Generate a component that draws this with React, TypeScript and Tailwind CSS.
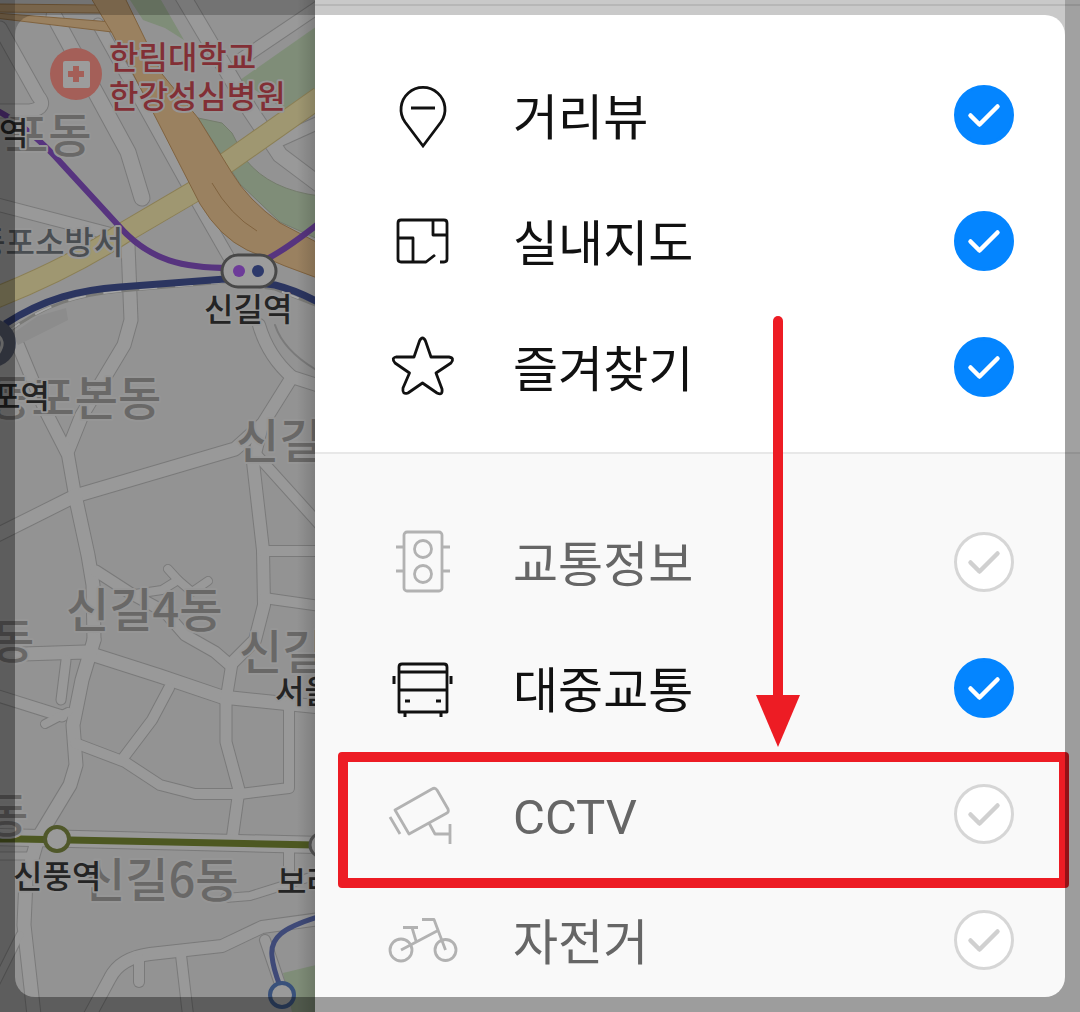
import React, { useState } from "react";

// road centre lines: [path, width]
const roads: [string, number][] = [
  ["M0 28 L38 96 Q48 108 30 111 L0 111", 15],
  ["M54 16 L128 152 L142 198", 17],
  ["M98 24 L188 186 L228 256", 13],
  ["M182 -5 L250 110 L280 155 L320 185", 17],
  ["M320 6 L240 60", 14],
  ["M320 122 L280 140", 14],
  ["M-5 204 L122 237", 14],
  ["M128 245 L131 320 L124 345 L82 415 L68 450", 15],
  ["M18 345 L45 410 L68 455 L75 495", 14],
  ["M-5 536 L75 496 L235 449 L262 425", 15],
  ["M75 495 L88 555 L93 585 L94 640", 15],
  ["M259 325 Q268 356 292 377 L262 425 L253 462 L263 550 L264 605 L255 640 L232 663", 14],
  ["M275 325 Q284 352 320 372", 2],
  ["M292 377 L320 386", 14],
  ["M255 453 L320 525", 12],
  ["M262 551 L320 551", 12],
  ["M264 598 L320 606", 12],
  ["M96 571 L130 593 L165 612 L185 635 L215 652 L230 665", 13],
  ["M135 594 L162 590 L178 580 L168 569", 10],
  ["M178 580 L192 592 L208 581", 10],
  ["M-5 655 L85 652 L160 676 L222 697 L320 707", 15],
  ["M232 663 L226 700 L226 742 L239 790 L232 840", 13],
  ["M94 640 L82 680 L73 725 L76 765 L70 785 L38 838 L26 880 L24 925 L34 1015", 15],
  ["M-5 695 L62 716", 13],
  ["M45 724 L68 712", 10],
  ["M66 660 L61 700", 11],
  ["M75 743 L125 762 L160 785 L195 794 L240 794 L289 788 L289 705", 12],
  ["M169 688 L152 720 L124 757", 12],
  ["M-5 837 L320 845", 18],
  ["M-5 856 L35 856", 9],
  ["M90 1015 L110 978 Q120 958 150 954 L222 946 L262 927 L320 919", 14],
  ["M139 958 L139 982", 12],
  ["M181 955 L188 1015", 12],
  ["M265 940 L282 990", 12],
  ["M289 850 L289 880", 12],
  ["M225 898 L250 896 L320 874", 10],
  ["M-5 985 L10 955 L20 935", 9],
];

type MapLabel = { text: string; x: number; y: number; kind: string };

const mapLabels: MapLabel[] = [
  { text: "포동", x: 5, y: 152, kind: "district" },
  { text: "영등포본동", x: -55, y: 415, kind: "district" },
  { text: "신길", x: 236, y: 458, kind: "district" },
  { text: "신길4동", x: 66, y: 627, kind: "district" },
  { text: "동", x: -9, y: 658, kind: "district" },
  { text: "신길", x: 239, y: 669, kind: "district" },
  { text: "동", x: -15, y: 832, kind: "district" },
  { text: "신길6동", x: 82, y: 897, kind: "district" },
  { text: "한림대학교", x: 109, y: 69, kind: "hospital" },
  { text: "한강성심병원", x: 109, y: 108, kind: "hospital" },
  { text: "등포소방서", x: -24, y: 254, kind: "place" },
  { text: "역", x: -1, y: 145, kind: "station" },
  { text: "신길역", x: 204, y: 321, kind: "station" },
  { text: "포역", x: -9, y: 408, kind: "station" },
  { text: "서울", x: 275, y: 703, kind: "station" },
  { text: "신풍역", x: 13, y: 888, kind: "station" },
  { text: "보라", x: 277, y: 893, kind: "station" },
];

const labelStyle: Record<string, string> = {
  district: "fill-[#696867] text-[47px] font-medium",
  hospital: "fill-[#822f35] text-[32px] font-medium",
  place: "fill-[#4a4e52] text-[32px] font-medium",
  station: "fill-[#242424] text-[32px] font-medium",
};

const MapView = () => {
  return (
    <svg
      viewBox="0 0 315 1012"
      preserveAspectRatio="xMinYMin slice"
      className="block w-full h-full font-['Noto_Sans_CJK_KR',sans-serif]"
    >
      <defs>
        <linearGradient id="edge" x1="0" x2="1" y1="0" y2="0">
          <stop offset="0" stopColor="#000" stopOpacity="0" />
          <stop offset="1" stopColor="#000" stopOpacity="0.14" />
        </linearGradient>
      </defs>
      <rect width="315" height="1012" fill="#939393" />

      <g fill="#7f8d78">
        <path d="M130 0 H161 L184 40 L165 28 L143 20Z" />
        <path d="M240 80 L320 24 V88 L285 110Z" />
        <path d="M283 973 L320 964 V1012 H292Z" />
      </g>

      <g fill="none" strokeLinecap="round" strokeLinejoin="round">
        {roads.map(([d, w], i) => (
          <path key={i} d={d} stroke="#7a7a7a" strokeWidth={w} />
        ))}
        {roads.map(([d, w], i) => (
          <path key={i} d={d} stroke="#999" strokeWidth={w - 2} />
        ))}
      </g>
      <path
        d="M198 118 L222 123 L232 133 L246 160 Q270 190 320 196 V240 L280 222 L240 184Z"
        fill="#7f8d78"
        stroke="#747c6c"
      />

      <g fill="none">
        <path d="M-5 298 Q70 268 125 232 L200 188" stroke="#8b7f55" strokeWidth="22" />
        <path d="M-5 298 Q70 268 125 232 L202 187" stroke="#9f9771" strokeWidth="20" />
        <path d="M222 166 L320 97" stroke="#8b7f55" strokeWidth="22" />
        <path d="M222 166 L320 97" stroke="#9f9771" strokeWidth="20" />
      </g>
      <g fill="#9a8160" stroke="#80633f">
        <path d="M-5 4 L100 5 V13 L-5 12Z" />
        <path d="M-5 13 L112 22 V32 L-5 18Z" />
        <path d="M91 -2 L112 33 L158 122 L200 204 Q220 237 247 250 L285 266 L320 279 V244 L280 223 Q248 200 232 173 L198 118 L162 74 L125 -2Z" />
        <path d="M212 183 Q230 215 257 231" fill="none" />
      </g>

      <g fill="none" strokeLinejoin="round">
        <path d="M-2 111 Q30 128 62 164 L118 225 C150 262 185 268 230 268 M265 260 Q285 250 318 224" stroke="#57347f" strokeWidth="6" />
        <path d="M5 334 C45 303 80 295 120 291 L225 282 L275 289 L318 306" stroke="#7a7a77" strokeWidth="3" />
        <path d="M5 334 C45 303 80 295 120 291 L225 282 L275 289 L318 306" stroke="#a5a5a5" strokeWidth="2" strokeDasharray="18 18" />
        <path d="M5 324 C45 298 80 290 120 287 L225 279 L275 285 Q295 290 318 302" stroke="#2b3560" strokeWidth="7" />
        <path d="M-2 839 H20 L318 845" stroke="#4d5821" strokeWidth="7" />
        <path d="M318 917 C282 928 270 938 272 956 Q273 968 280 986" stroke="#3f4a78" strokeWidth="5" />
      </g>

      <rect x="222" y="255" width="54" height="32" rx="16" fill="#9c9c9c" stroke="#484848" strokeWidth="3" />
      <circle cx="239" cy="271" r="6" fill="#6d3b99" />
      <circle cx="258" cy="271" r="6" fill="#2d396b" />
      <circle cx="57" cy="839" r="12" fill="#9a9a9a" stroke="#50582a" strokeWidth="4" />
      <circle cx="322" cy="845" r="12" fill="#9a9a9a" stroke="#555" strokeWidth="3" />
      <circle cx="282" cy="995" r="12" fill="#9a9a9a" stroke="#39517b" strokeWidth="4" />
      <path d="M18 345 L68 320 L66 308 L38 316 L12 334Z" fill="#8c8c8c" />
      <circle cx="-8" cy="343" r="24" fill="#4b505e" />
      <path d="M-6 333 Q8 340 -2 354" fill="none" stroke="#a0a0a0" strokeWidth="3" />

      <circle cx="76" cy="74" r="26" fill="#a45f58" />
      <rect x="63" y="61" width="27" height="27" rx="2" fill="#9c9c9c" />
      <path d="M76 66 V82 M68 74 H84" stroke="#a45f58" strokeWidth="6" />

      {mapLabels.map((label, i) => (
        <text
          key={i}
          x={label.x}
          y={label.y}
          className={labelStyle[label.kind]}
          stroke="#969696"
          strokeWidth="4"
          strokeLinejoin="round"
          paintOrder="stroke"
        >
          {label.text}
        </text>
      ))}
      <rect x="297" width="18" height="1012" fill="url(#edge)" />
    </svg>
  );
};

const icons: Record<string, React.ReactNode> = {
  street: (
    <>
      <path d="M36 67 L18 43 A22 22 0 1 1 54 43 Z" strokeLinejoin="miter" />
      <path d="M24 29 H48" strokeWidth="3" />
    </>
  ),
  indoor: (
    <>
      <path d="M53 57 H57 Q60 57 60 54 V18 Q60 15 57 15 H14 Q11 15 11 18 V54 Q11 57 14 57 H39 L48 50" />
      <path d="M46 15 V30 H60 M11 33 H26 V57" />
    </>
  ),
  star: (
    <path d="M32.500 10 Q35.500 4 38.500 10 L44 26 H62 Q68 27 64 32 L49 42 L55 58 Q56 65 50 62 L35.500 52 L21 62 Q15 64 16 57 L22.500 42 L8 32 Q4 27 9 26 H27 Z" />
  ),
  traffic: (
    <>
      <rect x="17" y="6" width="38" height="59" rx="3" />
      <circle cx="36" cy="23" r="8.500" />
      <circle cx="36" cy="48" r="8.500" />
      <path d="M9 21 H17 M55 21 H63 M9 45 H17 M55 45 H63" />
    </>
  ),
  bus: (
    <>
      <path d="M12 60 V15 Q12 12 15 12 H57 Q60 12 60 15 V60 Z M12 20 H60 M12 38 H60" />
      <path d="M7 24 V32 M64 24 V32 M18 60 V65 M54 60 V65" strokeWidth="3" />
      <path d="M18 49 H23 M49 49 H54" strokeWidth="3" />
    </>
  ),
  cctv: (
    <path d="M8 32 L45 11 Q48 9 50 12 L61 31 Q62 34 60 35 L22 56 Z M3 39 L13 56 M42 45 L48 56 H62 M63 46 V66" />
  ),
  bike: (
    <>
      <circle cx="14" cy="46" r="11" />
      <circle cx="58.500" cy="46" r="10.500" />
      <path d="M14 46 L50 27 M35 15.500 H47 L58.500 46 M16 23.500 H31 M25 23.500 L29 37" />
    </>
  ),
};

type Layer = { id: string; title: string; on: boolean; marked?: boolean };

const mainLayers: Layer[] = [
  { id: "street", title: "거리뷰", on: true },
  { id: "indoor", title: "실내지도", on: true },
  { id: "star", title: "즐겨찾기", on: true },
];

const extraLayers: Layer[] = [
  { id: "traffic", title: "교통정보", on: false },
  { id: "bus", title: "대중교통", on: true },
  { id: "cctv", title: "CCTV", on: false, marked: true },
  { id: "bike", title: "자전거", on: false },
];

const Marker = () => {
  return (
    <>
      <div className="absolute left-[23px] right-[11px] top-px h-[136px] border-10 border-[#ed1c24] rounded pointer-events-none" />
      <svg
        viewBox="0 0 44 431"
        className="absolute left-[441px] bottom-full mb-1 w-11 h-[431px] pointer-events-none"
      >
        <path d="M22 5 V385" stroke="#ed1c24" strokeWidth="10" strokeLinecap="round" />
        <path d="M0 379 H44 L22 431 Z" fill="#ed1c24" />
      </svg>
    </>
  );
};

const LayerRow = ({ layer }: { layer: Layer }) => {
  const [checked, setChecked] = useState(layer.on);

  return (
    <li className="relative">
      <label className="flex items-center h-[126px] pl-[72px] pr-[66px] cursor-pointer">
        <svg
          viewBox="0 0 72 72"
          fill="none"
          strokeWidth="2.800"
          strokeLinejoin="round"
          className={`size-[72px] shrink-0 ${
            checked ? "stroke-[#111111]" : "stroke-[#b2b2b2]"
          }`}
        >
          {icons[layer.id]}
        </svg>
        <span
          className={`flex-1 pl-[54px] pt-2 text-[49px] leading-[60px] ${
            checked ? "text-[#111111]" : "text-[#666666]"
          }`}
        >
          {layer.title}
        </span>
        <span className="grid shrink-0 place-items-center">
          <input
            type="checkbox"
            checked={checked}
            onChange={() => setChecked(!checked)}
            className="col-start-1 row-start-1 appearance-none size-[60px] rounded-full border-3 border-[#d6d6d6] bg-white checked:bg-[#0485ff] checked:border-[#0485ff]"
          />
          <svg
            viewBox="0 0 60 60"
            fill="none"
            strokeWidth="4.500"
            strokeLinecap="round"
            strokeLinejoin="round"
            className={`col-start-1 row-start-1 size-[60px] pointer-events-none ${
              checked ? "stroke-white" : "stroke-[#d0d0d0]"
            }`}
          >
            <path d="M16.500 30.500 L25.500 39.500 L43.500 21.500" />
          </svg>
        </span>
      </label>
      {layer.marked && <Marker />}
    </li>
  );
};

// translucent frame round the whole screen
const Frame = () => {
  return (
    <div className="absolute inset-0 overflow-hidden pointer-events-none">
      <div className="absolute inset-y-0 left-0 w-[15px] bg-black/37" />
      <div className="absolute inset-y-0 right-0 w-[15px] bg-black/37" />
      <div className="absolute inset-x-[15px] top-0 bottom-1/2 overflow-hidden">
        <div className="absolute inset-x-0 top-[15px] -bottom-10 rounded-[20px] shadow-[0_0_0_30px_rgba(0,0,0,0.21)]" />
      </div>
      <div className="absolute inset-x-[15px] top-1/2 bottom-0 overflow-hidden">
        <div className="absolute inset-x-0 -top-10 bottom-[15px] rounded-[20px] shadow-[0_0_0_30px_rgba(0,0,0,0.37)]" />
      </div>
    </div>
  );
};

const App = () => {
  return (
    <main className="relative flex min-h-screen overflow-hidden bg-[#f9f9f9] font-[Roboto,'Noto_Sans_CJK_KR',sans-serif]">
      <div className="w-[315px] shrink-0 overflow-hidden">
        <MapView />
      </div>
      <div className="flex-1">
        <div className="h-1 bg-white" />
        <ul className="bg-white border-y-2 border-[#e8e8e8] pt-[46px] pb-[22px]">
          {mainLayers.map((layer) => (
            <LayerRow key={layer.id} layer={layer} />
          ))}
        </ul>
        <ul className="pt-[45px] pb-[9px]">
          {extraLayers.map((layer) => (
            <LayerRow key={layer.id} layer={layer} />
          ))}
        </ul>
      </div>
      <Frame />
    </main>
  );
};

export default App;
